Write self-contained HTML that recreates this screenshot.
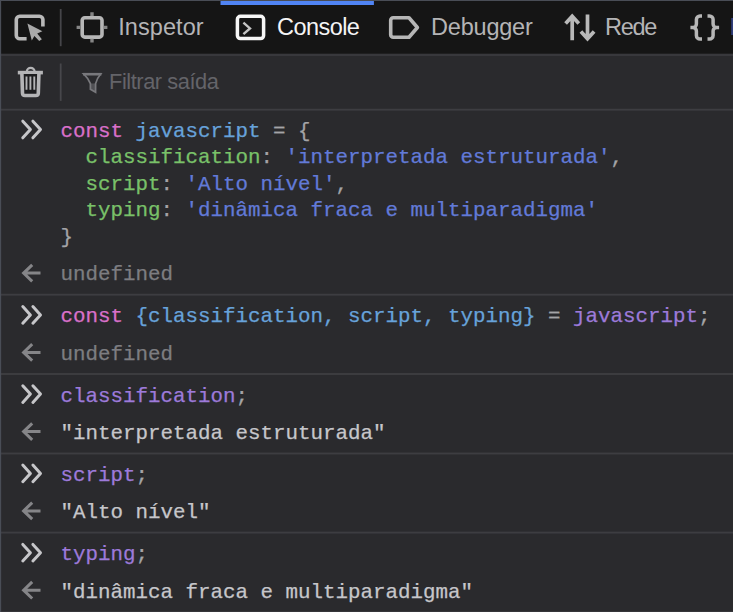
<!DOCTYPE html>
<html>
<head>
<meta charset="utf-8">
<title>Console</title>
<style>
html,body{margin:0;padding:0;}
body{width:733px;height:612px;overflow:hidden;background:#2a2a2d;position:relative;font-family:"Liberation Sans",sans-serif;}
.abs{position:absolute;}
.tab{color:#b4b4b6;font-size:23.5px;line-height:28px;white-space:nowrap;top:13px;}
.tab.on{color:#f4f4f5;}
.ln{left:60.5px;font-family:"Liberation Mono",monospace;font-size:20.84px;line-height:26px;white-space:pre;color:#a4a4a7;height:26px;-webkit-text-stroke:0.25px;}
.k{color:#d970c9;}
.d{color:#67a2da;}
.p{color:#79c169;}
.s{color:#627ad8;}
.v{color:#9d7ada;}
.u{color:#7d7d81;}
.o{color:#c6c6ca;}
svg{position:absolute;left:0;top:0;overflow:visible;}
</style>
</head>
<body>
<svg width="733" height="612" viewBox="0 0 733 612">
<rect x="0" y="0" width="733" height="612" fill="#2a2a2d"/>
<rect x="0" y="1" width="733" height="53" fill="#151515"/>
<rect x="0" y="53.7" width="733" height="2.3" fill="#38383c"/>
<rect x="0" y="0" width="733" height="1" fill="#494d56"/>
<rect x="0" y="108.75" width="733" height="1.9" fill="#3d3d41"/>
<rect x="0" y="293.75" width="733" height="1.9" fill="#3d3d41"/>
<rect x="0" y="373.05" width="733" height="1.9" fill="#3d3d41"/>
<rect x="0" y="452.55" width="733" height="1.9" fill="#3d3d41"/>
<rect x="0" y="531.65" width="733" height="1.9" fill="#3d3d41"/>
<rect x="0" y="611.30" width="733" height="1.9" fill="#3d3d41"/>
<rect x="0" y="0" width="1" height="612" fill="#494d56"/>
<rect x="1" y="1" width="0.5" height="611" fill="#494d56" opacity="0.3"/>
<rect x="220.5" y="1" width="153.4" height="4" fill="#5084f4"/>
<rect x="59.8" y="9" width="1.8" height="37.2" fill="#454549"/>
<rect x="59.8" y="63.5" width="1.8" height="37.4" fill="#47474b"/>
<path d="M42.9 26.4 V19.6 a3.4 3.4 0 0 0 -3.4 -3.4 H19.7 a3.4 3.4 0 0 0 -3.4 3.4 V35.4 a3.4 3.4 0 0 0 3.4 3.4 H26.6" fill="none" stroke="#b9b9b9" stroke-width="3.6"/>
<path d="M27.4 23.6 L42.4 31.3 L37.2 33.5 L41.9 39.2 L39.2 41 L34.4 35.9 L31.8 40.6 Z" fill="#a9a9a9"/>
<rect x="82.2" y="17.7" width="19.8" height="19.4" rx="2.6" fill="none" stroke="#b6b6b6" stroke-width="3.6"/>
<path d="M92 12.3V16M92 38.8V42.5M76.6 27.4H80.4M103.8 27.4H107.4" stroke="#858585" stroke-width="3.4" fill="none"/>
<rect x="237.4" y="16.3" width="26.2" height="22.3" rx="3" fill="none" stroke="#f6f6f6" stroke-width="3.5"/>
<path d="M243.4 22.6 L250 28.4 L243.4 34.2" fill="none" stroke="#c4c4c4" stroke-width="2.4"/>
<path d="M393.2 17.8 H409 L417.4 27.5 L409 37.2 H393.2 a2.5 2.5 0 0 1 -2.5 -2.5 V20.3 a2.5 2.5 0 0 1 2.5 -2.5 Z" fill="none" stroke="#b6b6b6" stroke-width="3.6" stroke-linejoin="round"/>
<path d="M572.2 40.3 V16 M565.6 23.6 L572.2 16.2 L578.8 23.6 M587.5 14.4 V39 M580.9 31.4 L587.5 38.8 L594.1 31.4" fill="none" stroke="#b9b9b9" stroke-width="3.7"/>
<path d="M702 15.9 h-2 a3.6 3.6 0 0 0 -3.6 3.6 v4.4 a3.6 3.6 0 0 1 -3.6 3.6 h-2.4 h2.4 a3.6 3.6 0 0 1 3.6 3.6 v4.4 a3.6 3.6 0 0 0 3.6 3.6 h2" fill="none" stroke="#b6b6b6" stroke-width="3.5"/>
<path d="M707.5 15.9 h2 a3.6 3.6 0 0 1 3.6 3.6 v4.4 a3.6 3.6 0 0 0 3.6 3.6 h2.4 h-2.4 a3.6 3.6 0 0 0 -3.6 3.6 v4.4 a3.6 3.6 0 0 1 -3.6 3.6 h-2" fill="none" stroke="#b6b6b6" stroke-width="3.5"/>
<rect x="731.2" y="18" width="1.8" height="17" fill="#303e7a"/>
<rect x="17.8" y="70.8" width="25.1" height="3.6" fill="#b4b4b6"/>
<path d="M26.9 71 a3.8 3.1 0 0 1 7.6 0" fill="none" stroke="#b4b4b6" stroke-width="2.2"/>
<path d="M21.9 74 L22.5 93.2 a2.4 2.4 0 0 0 2.4 2.3 H35.9 a2.4 2.4 0 0 0 2.4 -2.3 L38.9 74" fill="#1d1d1f" stroke="#b4b4b6" stroke-width="3.6"/>
<path d="M26.5 76.5V89.8M30.4 76.5V89.8M34.3 76.5V89.8" stroke="#b4b4b6" stroke-width="1.9" fill="none"/>
<path d="M90.4 83.4 V89.4 L95.6 92.6 V83.4" fill="#505054" stroke="none"/>
<path d="M83.6 73.8 H100.8 Q96.6 79 95.6 83.6 V92.3 L90.4 89.2 V83.6 Q88.6 78.5 83.6 73.8 Z" fill="none" stroke="#78787c" stroke-width="1.7" stroke-linejoin="miter"/>
<path d="M83 74.2 H101.4" fill="none" stroke="#78787c" stroke-width="2.6"/>
<path d="M22.8 121.2 L30.4 129.5 L22.8 137.8 M32.9 121.2 L40.5 129.5 L32.9 137.8" fill="none" stroke="#c6c6c9" stroke-width="3" stroke-linecap="round" stroke-linejoin="round"/>
<path d="M40.5 273.1 L24.5 273.1 M32.2 264.8 L23.6 273.1 L32.2 281.4" fill="none" stroke="#858588" stroke-width="3" stroke-linecap="butt" stroke-linejoin="miter"/>
<path d="M22.8 306.6 L30.4 314.9 L22.8 323.2 M32.9 306.6 L40.5 314.9 L32.9 323.2" fill="none" stroke="#c6c6c9" stroke-width="3" stroke-linecap="round" stroke-linejoin="round"/>
<path d="M40.5 352.4 L24.5 352.4 M32.2 344.1 L23.6 352.4 L32.2 360.7" fill="none" stroke="#858588" stroke-width="3" stroke-linecap="butt" stroke-linejoin="miter"/>
<path d="M22.8 385.8 L30.4 394.1 L22.8 402.4 M32.9 385.8 L40.5 394.1 L32.9 402.4" fill="none" stroke="#c6c6c9" stroke-width="3" stroke-linecap="round" stroke-linejoin="round"/>
<path d="M40.5 431.6 L24.5 431.6 M32.2 423.3 L23.6 431.6 L32.2 439.9" fill="none" stroke="#858588" stroke-width="3" stroke-linecap="butt" stroke-linejoin="miter"/>
<path d="M22.8 465.1 L30.4 473.4 L22.8 481.7 M32.9 465.1 L40.5 473.4 L32.9 481.7" fill="none" stroke="#c6c6c9" stroke-width="3" stroke-linecap="round" stroke-linejoin="round"/>
<path d="M40.5 510.9 L24.5 510.9 M32.2 502.6 L23.6 510.9 L32.2 519.2" fill="none" stroke="#858588" stroke-width="3" stroke-linecap="butt" stroke-linejoin="miter"/>
<path d="M22.8 544.4 L30.4 552.7 L22.8 561.0 M32.9 544.4 L40.5 552.7 L32.9 561.0" fill="none" stroke="#c6c6c9" stroke-width="3" stroke-linecap="round" stroke-linejoin="round"/>
<path d="M40.5 590.2 L24.5 590.2 M32.2 581.9 L23.6 590.2 L32.2 598.5" fill="none" stroke="#858588" stroke-width="3" stroke-linecap="butt" stroke-linejoin="miter"/>
</svg>


<div class="abs tab" style="left:118.2px;letter-spacing:0.08px;">Inspetor</div>
<div class="abs tab on" style="left:277px;letter-spacing:-0.55px;">Console</div>
<div class="abs tab" style="left:431px;letter-spacing:-0.2px;">Debugger</div>
<div class="abs tab" style="left:605px;letter-spacing:-1.25px;">Rede</div>

<div class="abs" style="left:109px;top:69px;font-size:21.8px;line-height:26px;color:#646469;white-space:nowrap;letter-spacing:-0.43px;">Filtrar saída</div>

<div class="abs ln " style="top:119.0px;"><span class="k">const</span> <span class="d">javascript</span> = {</div>
<div class="abs ln " style="top:145.0px;">  <span class="p">classification</span>: <span class="s">'interpretada estruturada'</span>,</div>
<div class="abs ln " style="top:172.0px;">  <span class="p">script</span>: <span class="s">'Alto nível'</span>,</div>
<div class="abs ln " style="top:198.0px;">  <span class="p">typing</span>: <span class="s">'dinâmica fraca e multiparadigma'</span></div>
<div class="abs ln " style="top:225.0px;">}</div>
<div class="abs ln u" style="top:262.3px;">undefined</div>
<div class="abs ln " style="top:304.0px;"><span class="k">const</span> <span class="d">{classification, script, typing}</span> = <span class="v">javascript</span>;</div>
<div class="abs ln u" style="top:341.7px;">undefined</div>
<div class="abs ln " style="top:383.7px;"><span class="v">classification</span>;</div>
<div class="abs ln o" style="top:420.9px;">"interpretada estruturada"</div>
<div class="abs ln " style="top:463.0px;"><span class="v">script</span>;</div>
<div class="abs ln o" style="top:500.2px;">"Alto nível"</div>
<div class="abs ln " style="top:542.3px;"><span class="v">typing</span>;</div>
<div class="abs ln o" style="top:579.5px;">"dinâmica fraca e multiparadigma"</div>
</body>
</html>
